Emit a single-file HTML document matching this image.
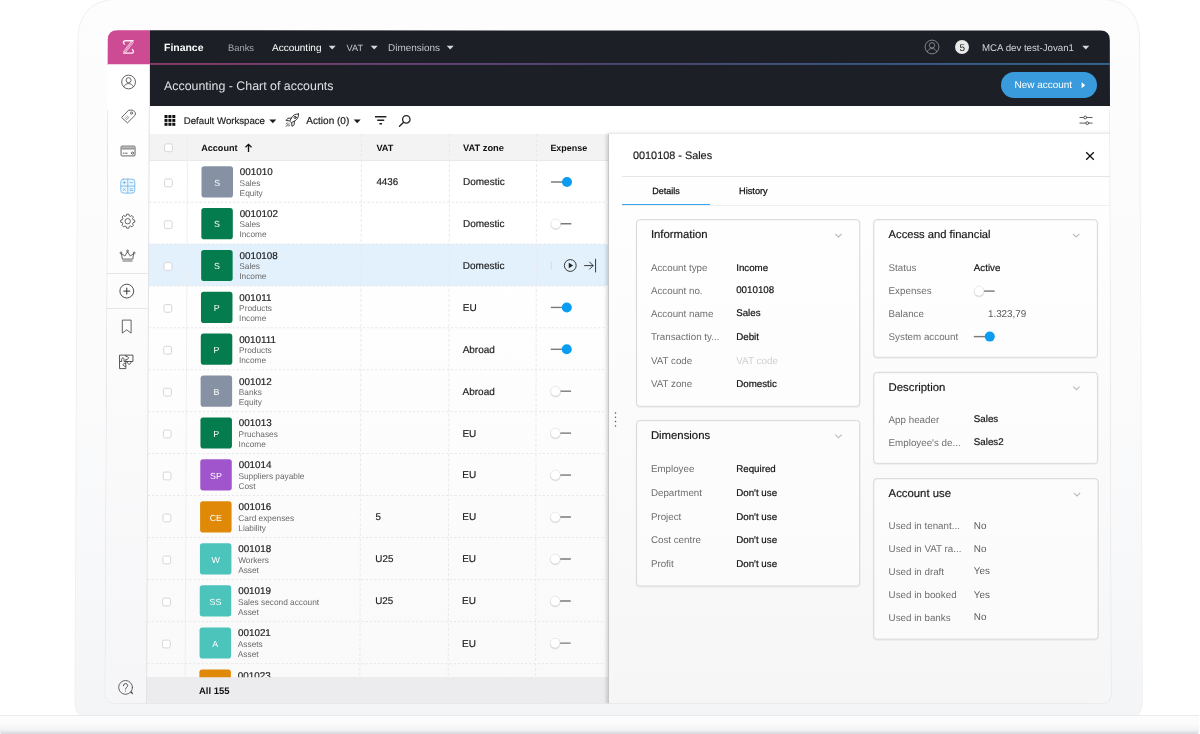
<!DOCTYPE html>
<html lang="en">
<head>
<meta charset="utf-8">
<title>Accounting - Chart of accounts</title>
<style>
*{box-sizing:border-box;margin:0;padding:0}
html,body{width:1200px;height:734px;overflow:hidden;background:#fff}
body{position:relative;font-family:"Liberation Sans",Arial,sans-serif;color:#1b1b1b;text-rendering:geometricPrecision}
#bezel{position:absolute;left:0;top:0}
#base{position:absolute;left:0;top:714.5px;width:1199px;height:19.5px;border-top:1px solid #e9eaee;border-radius:0 0 2px 2px;
 background:linear-gradient(to bottom,#fdfdfe 0%,#fbfbfc 45%,#f2f2f5 78%,#d6d7de 100%)}
#screen{position:absolute;left:0;top:0;width:1200px;height:734px;background:#fff;
 clip-path:path("M107.75 39.80Q107.80 30.30 117.30 30.30L1100.30 30.50Q1109.80 30.50 1109.82 40.00L1111.48 694.10Q1111.50 703.60 1102.00 703.60L114.10 703.50Q104.60 703.50 104.65 694.00Z")}
#screen div,#screen span,#screen svg{position:absolute}
#txt{will-change:transform}
#txt text{font-family:"Liberation Sans",Arial,sans-serif;white-space:pre}
</style>
</head>
<body>
<svg id="bezel" width="1200" height="734" viewBox="0 0 1200 734">
 <defs><linearGradient id="bz" x1="0" y1="0" x2="0" y2="1"><stop offset="0" stop-color="#fdfdfd"/><stop offset=".5" stop-color="#fbfbfc"/><stop offset=".8" stop-color="#f7f8f9"/><stop offset="1" stop-color="#f4f5f7"/></linearGradient></defs>
 <path d="M78 40C78 14 92 -0.5 116 -0.5H1102C1126 -0.500 1139.600 14 1139.600 40L1142.300 700C1142.300 709 1140 713 1136 716H81C77 713 75 709 75 700Z" fill="url(#bz)" stroke="#eff0f2" stroke-width="1"/>
</svg>
<div id="screen">
<div style="left:149.5px;top:30px;width:961.500px;height:75.600px;background:#1c1f26"></div>
<div style="left:107px;top:30px;width:42.700px;height:34.500px;background:#cd4b93"></div>
<div style="left:955.3px;top:40px;width:14px;height:14px;border-radius:50%;background:#e9e9ea"></div>
<div style="left:1000.8px;top:72.3px;width:95.800px;height:25.800px;border-radius:13px;background:#3a9bdc"></div>
<div style="left:150px;top:105.500px;width:961px;height:28.500px;background:#fff"></div>
<div style="left:140px;top:134px;width:471px;height:572px;background:linear-gradient(to bottom,#fff 0%,#fff 20%,#f9f9fa 100%)"></div>
<div style="left:140px;top:134px;width:471px;height:26.6px;background:#f3f3f4;border-bottom:1px solid #e9e9ea"></div>
<div style="left:140px;top:244.1px;width:471px;height:41.84px;background:#e2f1fc"></div>
<div style="left:187.4px;top:134px;width:0;height:572px;border-left:1px solid #efeff0;transform-origin:0 0;transform:skewX(-0.2462deg)"></div>
<div style="left:361.2px;top:134px;width:0;height:572px;border-left:1px dashed #e9e9eb;transform-origin:0 0;transform:skewX(-0.1710deg)"></div>
<div style="left:448.5px;top:134px;width:0;height:572px;border-left:1px dashed #e9e9eb;transform-origin:0 0;transform:skewX(-0.1332deg)"></div>
<div style="left:536px;top:134px;width:0;height:572px;border-left:1px dashed #e9e9eb;transform-origin:0 0;transform:skewX(-0.0953deg)"></div>
<div style="left:140px;top:677.2px;width:471px;height:30px;background:#ececee"></div>
<div style="left:608px;top:134px;width:504px;height:573px;background:linear-gradient(to bottom,#fff 0%,#fefefe 15%,#f6f6f7 100%);box-shadow:-1px 0 4px rgba(0,0,0,.2);border-left:1px solid #c6c6c9"></div>
<div style="left:622px;top:176px;width:489px;height:1px;background:#e6e6e8"></div>
<div style="left:622px;top:204.600px;width:489px;height:1px;background:#f0f0f2"></div>
<div style="left:622px;top:203.800px;width:87.500px;height:1.400px;background:#3aa5ef"></div>
<div style="left:100px;top:64.3px;width:50px;height:640px;background:linear-gradient(to bottom,#fff 0%,#fdfdfd 30%,#fafafb 55%,#f6f6f8 100%);clip-path:polygon(0 0,49.5px 0,46.56px 100%,0 100%)"></div>
<div style="left:149px;top:64.3px;width:0;height:641.7px;border-left:1px solid #e2e2e5;transform-origin:0 0;transform:skewX(-0.2629deg)"></div>
<div style="left:100px;top:273px;width:49px;height:1px;background:#e6e6e8"></div>
<div style="left:100px;top:308.4px;width:49px;height:1px;background:#e6e6e8"></div>
<svg id="ico" style="left:0;top:0" width="1200" height="734">
<defs><linearGradient id="hl" x1="0" y1="0" x2="1" y2="0"><stop offset="0" stop-color="#cd4b93"/><stop offset=".25" stop-color="#9b5aa6"/><stop offset=".5" stop-color="#6c60a8"/><stop offset=".75" stop-color="#4c7cc0"/><stop offset="1" stop-color="#3f93d6"/></linearGradient></defs><rect x="149.5" y="63.400" width="961.500" height="1.150" fill="url(#hl)"/>
<g transform="translate(122.4 39.5)" fill="none" stroke="#fff0f8" stroke-linejoin="round" stroke-linecap="round"><path d="M2.100 4.700C.300 3.400.700 1.200 3 1.200h7.600M9.900 10C11.700 11.300 11.300 13.600 9 13.600H1.400" stroke-width="1.350"/><path d="M10.600 1.200 1.400 13.600M8.900 1.700 1.100 12M10.900 2.900 3.100 13.200" stroke-width=".8" opacity=".9"/></g>
<path d="M328.7 45.8h7l-3.500 3.700z" fill="#d5d7db"/>
<path d="M370.7 45.8h7l-3.500 3.700z" fill="#d5d7db"/>
<path d="M446.7 45.8h7l-3.500 3.700z" fill="#d5d7db"/>
<g transform="translate(924.5 39.5)" fill="none" stroke="#8b8f98" stroke-width="0.9"><circle cx="7.5" cy="7.5" r="6.900"/><circle cx="7.5" cy="5.800" r="2.700"/><path d="M2.800 12.500c.700-2.400 2.500-3.500 4.700-3.500s4 1.100 4.700 3.500"/></g>
<path d="M1082.3 45.8h7l-3.500 3.700z" fill="#d5d7db"/>
<path d="M1081.600 82.200v6l3.600-3z" fill="#fff"/>
<g transform="translate(164.5 115)" fill="#111"><rect x="0.0" y="0.0" width="3" height="3"/><rect x="3.9" y="0.0" width="3" height="3"/><rect x="7.8" y="0.0" width="3" height="3"/><rect x="0.0" y="3.9" width="3" height="3"/><rect x="3.9" y="3.9" width="3" height="3"/><rect x="7.8" y="3.9" width="3" height="3"/><rect x="0.0" y="7.8" width="3" height="3"/><rect x="3.9" y="7.8" width="3" height="3"/><rect x="7.8" y="7.8" width="3" height="3"/></g>
<path d="M269.3 119.5h7l-3.500 3.700z" fill="#1b1b1b"/>
<g transform="translate(284.5 113)" fill="none" stroke="#222" stroke-width="0.9" stroke-linejoin="round" stroke-linecap="round"><path d="M14 1c-3.200-.200-5.600 1.200-7.200 4.100L5.300 8.200l1.500 1.500 3.100-1.500C12.800 6.600 14.200 4.200 14 1z"/><path d="M6.800 5.100 3.300 5.300 1.600 7.500l3.100.300M9.900 8.200l-.200 3.500-2.200 1.700-.300-3.100"/><circle cx="10.600" cy="4.400" r="1.100"/><path d="M4.300 10.700 1.700 13.300M3 9.800 1.900 10.900M5.200 12 4.100 13.100"/></g>
<path d="M353.7 119.5h7l-3.500 3.700z" fill="#1b1b1b"/>
<g transform="translate(375 116)" fill="none" stroke="#222" stroke-width="1.450"><path d="M0 .800h11.400M2.200 4.300h7M4.400 7.800h2.600"/></g>
<g transform="translate(398.5 114.5)" fill="none" stroke="#222" stroke-width="1.300" stroke-linecap="round"><circle cx="7.800" cy="4.900" r="3.700"/><path d="M5.100 7.700 1 11.800"/></g>
<g transform="translate(1079.5 114.5)" fill="none" stroke="#333" stroke-width="0.8"><path d="M0 3h4.300M7.100 3H13M0 8.600h6.300M9.100 8.600H13"/><circle cx="5.700" cy="3" r="1.400"/><circle cx="7.700" cy="8.600" r="1.400"/></g>
<g transform="translate(121.09 74.5)" fill="none" stroke="#4a4a4a" stroke-width="0.85" stroke-linejoin="round"><circle cx="7.5" cy="7.5" r="6.900"/><circle cx="7.5" cy="5.700" r="2.500"/><path d="M2.700 12.300c.900-2.100 2.600-3.200 4.800-3.200s3.900 1.100 4.800 3.200"/></g>
<g transform="translate(120.92 109)" fill="none" stroke="#4a4a4a" stroke-width="0.85" stroke-linejoin="round"><path d="M.700 8.400 7.800 1.200H12l2.400 2.400V6L6.500 13.900z"/><circle cx="10.700" cy="4.100" r="1.100"/><path d="M3.900 8.600l2.400 2.400M4.900 7.600l2.400 2.400M5.900 6.600l2.400 2.400" stroke-width="0.55"/></g>
<g transform="translate(120.56 145.6)" fill="none" stroke="#4a4a4a" stroke-width="0.85" stroke-linejoin="round"><rect x=".5" y=".5" width="14" height="9.800" rx="1"/><rect x=".9" y="1.700" width="13.200" height="2.300" fill="#9a9a9a" stroke="none"/><path d="M2.300 7.600h1.700M4.700 7.600h2.200" stroke-width="0.9"/><circle cx="12" cy="7.500" r="1.100"/></g>
<g transform="translate(120.29 178.6)" fill="#eef7fe" stroke="#63b2ec" stroke-width="0.8" stroke-linecap="round"><rect x=".5" y=".5" width="14" height="14" rx="2.800"/><path d="M7.500 .5v14M.5 7.500h14" fill="none"/><path d="M2.700 4h2.600M4 2.700v2.600M9.700 4h2.600M3.100 10.100l1.800 1.800M4.900 10.100l-1.800 1.800M9.700 10.300h2.600M9.700 11.900h2.600" stroke-width="0.8"/></g>
<g transform="translate(119.72 213.2)" fill="none" stroke="#4a4a4a" stroke-width="0.85" stroke-linejoin="round"><circle cx="8" cy="8" r="2.700"/><path d="M6.900 1h2.200l.400 1.700 1.200.500 1.500-.900 1.500 1.500-.900 1.500.500 1.200 1.700.400v2.200l-1.700.400-.500 1.200.900 1.500-1.500 1.500-1.500-.900-1.200.500-.400 1.700H6.900l-.400-1.700-1.200-.500-1.500.900-1.500-1.500.900-1.500-.500-1.200L1 9.100V6.900l1.700-.400.500-1.200-.900-1.500 1.500-1.500 1.500.900 1.200-.500z"/></g>
<g transform="translate(119.55 249.5)" fill="none" stroke="#4a4a4a" stroke-width="0.85" stroke-linejoin="round"><path d="M2.800 9.600 1.900 4.200l3.400 2.300L8 2.200l2.700 4.300 3.400-2.300-.900 5.400z"/><circle cx="8" cy="1.400" r=".9"/><circle cx="1.400" cy="3.400" r=".9"/><circle cx="14.600" cy="3.400" r=".9"/><path d="M3 11.400h10" stroke="#9a9a9a" stroke-width="1.5"/></g>
<g transform="translate(119.28 283.6)" fill="none" stroke="#333" stroke-width="0.85"><circle cx="7.5" cy="7.5" r="6.900"/><path d="M7.500 4.100v6.800M4.100 7.500h6.800" stroke-width="1"/></g>
<g transform="translate(121.72 319.5)" fill="none" stroke="#4a4a4a" stroke-width="0.85" stroke-linejoin="round"><path d="M.600.600h8.800v13L5 10.300.600 13.600z"/></g>
<g transform="translate(119.24 354.8)" fill="none" stroke="#2e2e2e" stroke-width="0.8" stroke-linejoin="round"><path d="M.300.300H13.700V6.700H6.600V13.800H.300z"/><path d="M6.600.300V1.700c3.500-.300 3.500 3.200 0 2.900V6.700M.300 6.700H2.400V4.600c0-2 2.400-2 2.400 0V6.700H6.600M6.600 8.400c-3.600-.300-3.600 3.400 0 3.100M8.200 6.700c-.300 3.600 3.900 3.600 3.600 0"/></g>
<g transform="translate(117.58 679.4)" fill="none" stroke="#4a4a4a" stroke-width="0.85" stroke-linecap="round"><circle cx="8" cy="8" r="6.900"/><path d="M12.900 13.200l2.300 1.500-1-2.600" fill="#4a4a4a" stroke-width=".5"/><path d="M5.900 6.300c0-1.300 1-2.100 2.100-2.100s2.100.800 2.100 2c0 1.600-2.100 1.700-2.100 3.400" stroke-width="1"/><circle cx="8" cy="11.700" r=".5" fill="#4a4a4a" stroke="none"/></g>
<path d="M149.19 202.29H608" stroke="#e7e7ea" stroke-width="1" stroke-dasharray="2.2 2"/>
<rect x="164.5" y="179" width="7.8" height="7.8" rx="1.6" fill="#fff" stroke="#d6d6da" stroke-width="1"/>
<rect x="201.5" y="166.3" width="31.500" height="31.200" rx="2.800" fill="#8691a4"/>
<path d="M551 182h13" stroke="#7a7a7a" stroke-width="1.4"/><circle cx="567" cy="182" r="5" fill="#0a9cf1"/>
<path d="M149 244.1H608" stroke="#e7e7ea" stroke-width="1" stroke-dasharray="2.2 2"/>
<rect x="164.31" y="220.79" width="7.8" height="7.8" rx="1.6" fill="#fff" stroke="#d6d6da" stroke-width="1"/>
<rect x="201.32" y="208.09" width="31.500" height="31.200" rx="2.800" fill="#047c4d"/>
<path d="M558.93 223.79h12.400" stroke="#7a7a7a" stroke-width="1.4"/><circle cx="555.73" cy="224.69" r="5.500" fill="#000" opacity=".06"/><circle cx="555.73" cy="224.39" r="5.100" fill="#000" opacity=".09"/><circle cx="555.73" cy="223.79" r="4.900" fill="#fff" stroke="#d9d9dc" stroke-width=".5"/>
<path d="M148.8 285.94H608" stroke="#e7e7ea" stroke-width="1" stroke-dasharray="2.2 2"/>
<rect x="164.12" y="262.6" width="7.8" height="7.8" rx="1.6" fill="#fff" stroke="#d6d6da" stroke-width="1"/>
<rect x="201.15" y="249.9" width="31.500" height="31.200" rx="2.800" fill="#047c4d"/>
<path d="M551.37 261.6v8" stroke="#cfdde8" stroke-width="1"/>
<g transform="translate(563.37 259.2)" fill="none" stroke="#222" stroke-width="0.9"><circle cx="6.900" cy="6.300" r="5.900"/><path d="M5.400 3.500 9.700 6.300 5.400 9.100z" fill="#222" stroke="none"/></g>
<g transform="translate(583.37 259.6)" fill="none" stroke="#222" stroke-width="0.9"><path d="M.800 6h9M6 2.200 9.800 6 6 9.800M12.200 -.800v13.600"/></g>
<path d="M148.61 327.81H608" stroke="#e7e7ea" stroke-width="1" stroke-dasharray="2.2 2"/>
<rect x="163.94" y="304.44" width="7.8" height="7.8" rx="1.6" fill="#fff" stroke="#d6d6da" stroke-width="1"/>
<rect x="200.97" y="291.74" width="31.500" height="31.200" rx="2.800" fill="#047c4d"/>
<path d="M550.8 307.44h13" stroke="#7a7a7a" stroke-width="1.4"/><circle cx="566.8" cy="307.44" r="5" fill="#0a9cf1"/>
<path d="M148.42 369.7H608" stroke="#e7e7ea" stroke-width="1" stroke-dasharray="2.2 2"/>
<rect x="163.75" y="346.31" width="7.8" height="7.8" rx="1.6" fill="#fff" stroke="#d6d6da" stroke-width="1"/>
<rect x="200.8" y="333.61" width="31.500" height="31.200" rx="2.800" fill="#047c4d"/>
<path d="M550.74 349.31h13" stroke="#7a7a7a" stroke-width="1.4"/><circle cx="566.74" cy="349.31" r="5" fill="#0a9cf1"/>
<path d="M148.23 411.62H608" stroke="#e7e7ea" stroke-width="1" stroke-dasharray="2.2 2"/>
<rect x="163.56" y="388.2" width="7.8" height="7.8" rx="1.6" fill="#fff" stroke="#d6d6da" stroke-width="1"/>
<rect x="200.62" y="375.5" width="31.500" height="31.200" rx="2.800" fill="#8691a4"/>
<path d="M558.68 391.2h12.400" stroke="#7a7a7a" stroke-width="1.4"/><circle cx="555.48" cy="392.1" r="5.500" fill="#000" opacity=".06"/><circle cx="555.48" cy="391.8" r="5.100" fill="#000" opacity=".09"/><circle cx="555.48" cy="391.2" r="4.900" fill="#fff" stroke="#d9d9dc" stroke-width=".5"/>
<path d="M148.04 453.57H608" stroke="#e7e7ea" stroke-width="1" stroke-dasharray="2.2 2"/>
<rect x="163.37" y="430.12" width="7.8" height="7.8" rx="1.6" fill="#fff" stroke="#d6d6da" stroke-width="1"/>
<rect x="200.45" y="417.42" width="31.500" height="31.200" rx="2.800" fill="#047c4d"/>
<path d="M558.61 433.12h12.400" stroke="#7a7a7a" stroke-width="1.4"/><circle cx="555.41" cy="434.02" r="5.500" fill="#000" opacity=".06"/><circle cx="555.41" cy="433.72" r="5.100" fill="#000" opacity=".09"/><circle cx="555.41" cy="433.12" r="4.900" fill="#fff" stroke="#d9d9dc" stroke-width=".5"/>
<path d="M147.84 495.54H608" stroke="#e7e7ea" stroke-width="1" stroke-dasharray="2.2 2"/>
<rect x="163.19" y="472.07" width="7.8" height="7.8" rx="1.6" fill="#fff" stroke="#d6d6da" stroke-width="1"/>
<rect x="200.27" y="459.37" width="31.500" height="31.200" rx="2.800" fill="#a055cc"/>
<path d="M558.55 475.07h12.400" stroke="#7a7a7a" stroke-width="1.4"/><circle cx="555.35" cy="475.97" r="5.500" fill="#000" opacity=".06"/><circle cx="555.35" cy="475.67" r="5.100" fill="#000" opacity=".09"/><circle cx="555.35" cy="475.07" r="4.900" fill="#fff" stroke="#d9d9dc" stroke-width=".5"/>
<path d="M147.65 537.54H608" stroke="#e7e7ea" stroke-width="1" stroke-dasharray="2.2 2"/>
<rect x="163" y="514.04" width="7.8" height="7.8" rx="1.6" fill="#fff" stroke="#d6d6da" stroke-width="1"/>
<rect x="200.09" y="501.34" width="31.500" height="31.200" rx="2.800" fill="#e08909"/>
<path d="M558.48 517.04h12.400" stroke="#7a7a7a" stroke-width="1.4"/><circle cx="555.28" cy="517.94" r="5.500" fill="#000" opacity=".06"/><circle cx="555.28" cy="517.64" r="5.100" fill="#000" opacity=".09"/><circle cx="555.28" cy="517.04" r="4.900" fill="#fff" stroke="#d9d9dc" stroke-width=".5"/>
<path d="M147.46 579.57H608" stroke="#e7e7ea" stroke-width="1" stroke-dasharray="2.2 2"/>
<rect x="162.81" y="556.04" width="7.8" height="7.8" rx="1.6" fill="#fff" stroke="#d6d6da" stroke-width="1"/>
<rect x="199.92" y="543.34" width="31.500" height="31.200" rx="2.800" fill="#4cc3bb"/>
<path d="M558.42 559.04h12.400" stroke="#7a7a7a" stroke-width="1.4"/><circle cx="555.22" cy="559.94" r="5.500" fill="#000" opacity=".06"/><circle cx="555.22" cy="559.64" r="5.100" fill="#000" opacity=".09"/><circle cx="555.22" cy="559.04" r="4.900" fill="#fff" stroke="#d9d9dc" stroke-width=".5"/>
<path d="M147.27 621.62H608" stroke="#e7e7ea" stroke-width="1" stroke-dasharray="2.2 2"/>
<rect x="162.62" y="598.07" width="7.8" height="7.8" rx="1.6" fill="#fff" stroke="#d6d6da" stroke-width="1"/>
<rect x="199.74" y="585.37" width="31.500" height="31.200" rx="2.800" fill="#4cc3bb"/>
<path d="M558.35 601.07h12.400" stroke="#7a7a7a" stroke-width="1.4"/><circle cx="555.15" cy="601.97" r="5.500" fill="#000" opacity=".06"/><circle cx="555.15" cy="601.67" r="5.100" fill="#000" opacity=".09"/><circle cx="555.15" cy="601.07" r="4.900" fill="#fff" stroke="#d9d9dc" stroke-width=".5"/>
<path d="M147.07 663.7H608" stroke="#e7e7ea" stroke-width="1" stroke-dasharray="2.2 2"/>
<rect x="162.44" y="640.12" width="7.8" height="7.8" rx="1.6" fill="#fff" stroke="#d6d6da" stroke-width="1"/>
<rect x="199.57" y="627.42" width="31.500" height="31.200" rx="2.800" fill="#4cc3bb"/>
<path d="M558.28 643.12h12.400" stroke="#7a7a7a" stroke-width="1.4"/><circle cx="555.08" cy="644.02" r="5.500" fill="#000" opacity=".06"/><circle cx="555.08" cy="643.72" r="5.100" fill="#000" opacity=".09"/><circle cx="555.08" cy="643.12" r="4.900" fill="#fff" stroke="#d9d9dc" stroke-width=".5"/>
<path d="M146.88 705.81H608" stroke="#e7e7ea" stroke-width="1" stroke-dasharray="2.2 2"/>
<path d="M199.39 677.2V672.3Q199.39 669.5 202.19 669.5H228.09Q230.89 669.5 230.89 672.3V677.2z" fill="#e08909"/>
<rect x="164.5" y="143.9" width="7.8" height="7.8" rx="1.6" fill="#fff" stroke="#d6d6da" stroke-width="1"/>
<g transform="translate(244.5 143.4)" fill="none" stroke="#111" stroke-width="1.3"><path d="M4 8.500V1.200M1 3.900 4 .900 7 3.900"/></g>
<g transform="translate(1085.5 151.5)" fill="none" stroke="#111" stroke-width="1.3"><path d="M.700.700l7.600 7.600M8.300.700.700 8.300"/></g>
<circle cx="615.500" cy="413" r=".75" fill="#555"/>
<circle cx="615.500" cy="417.3" r=".75" fill="#555"/>
<circle cx="615.500" cy="421.6" r=".75" fill="#555"/>
<circle cx="615.500" cy="425.9" r=".75" fill="#555"/>
<rect x="636.5" y="220.5" width="223.2" height="186.7" rx="3.200" fill="none" stroke="#000" stroke-opacity=".045" stroke-width="1.600"/><rect x="636.5" y="219.6" width="223.2" height="186.7" rx="3.200" fill="#fff" fill-opacity=".45" stroke="#d9d9dc" stroke-width="1"/>
<g transform="translate(834.5 233.1)" fill="none" stroke="#b8b8bb" stroke-width="1.050"><path d="M.800.800 4 3.900 7.200.800"/></g>
<rect x="636.5" y="421.3" width="223.2" height="165.6" rx="3.200" fill="none" stroke="#000" stroke-opacity=".045" stroke-width="1.600"/><rect x="636.5" y="420.4" width="223.2" height="165.6" rx="3.200" fill="#fff" fill-opacity=".45" stroke="#d9d9dc" stroke-width="1"/>
<g transform="translate(834.5 433.9)" fill="none" stroke="#b8b8bb" stroke-width="1.050"><path d="M.800.800 4 3.900 7.200.800"/></g>
<rect x="873.7" y="220.5" width="223.7" height="137.7" rx="3.200" fill="none" stroke="#000" stroke-opacity=".045" stroke-width="1.600"/><rect x="873.7" y="219.6" width="223.7" height="137.7" rx="3.200" fill="#fff" fill-opacity=".45" stroke="#d9d9dc" stroke-width="1"/>
<g transform="translate(1072.2 233.1)" fill="none" stroke="#b8b8bb" stroke-width="1.050"><path d="M.800.800 4 3.900 7.200.800"/></g>
<path d="M982.3 291.1h12.400" stroke="#7a7a7a" stroke-width="1.4"/><circle cx="979.1" cy="292" r="5.500" fill="#000" opacity=".06"/><circle cx="979.1" cy="291.7" r="5.100" fill="#000" opacity=".09"/><circle cx="979.1" cy="291.1" r="4.900" fill="#fff" stroke="#d9d9dc" stroke-width=".5"/>
<path d="M973.8 336.6h13" stroke="#7a7a7a" stroke-width="1.4"/><circle cx="989.8" cy="336.6" r="5" fill="#0a9cf1"/>
<rect x="873.7" y="373.2" width="223.9" height="91.1" rx="3.200" fill="none" stroke="#000" stroke-opacity=".045" stroke-width="1.600"/><rect x="873.7" y="372.3" width="223.9" height="91.1" rx="3.200" fill="#fff" fill-opacity=".45" stroke="#d9d9dc" stroke-width="1"/>
<g transform="translate(1072.4 385.8)" fill="none" stroke="#b8b8bb" stroke-width="1.050"><path d="M.800.800 4 3.900 7.200.800"/></g>
<rect x="873.7" y="479.5" width="224.5" height="160.5" rx="3.200" fill="none" stroke="#000" stroke-opacity=".045" stroke-width="1.600"/><rect x="873.7" y="478.6" width="224.5" height="160.5" rx="3.200" fill="#fff" fill-opacity=".45" stroke="#d9d9dc" stroke-width="1"/>
<g transform="translate(1073 492.1)" fill="none" stroke="#b8b8bb" stroke-width="1.050"><path d="M.800.800 4 3.900 7.200.800"/></g>
<path d="M107.600 110 104.600 694.500Q104.600 703.500 114 703.500L1102 703.600Q1111.500 703.600 1111.500 694L1110 110" fill="none" stroke="#dcdde2" stroke-width="1"/>
</svg>
<svg id="txt" style="left:0;top:0" width="1200" height="734">
<text x="164" y="51" font-size="10.45" fill="#fff" font-weight="700">Finance</text>
<text x="228" y="51" font-size="9.4" fill="#a4a8b0">Banks</text>
<text x="272" y="51" font-size="10" fill="#fff">Accounting</text>
<text x="346.5" y="51" font-size="9.2" fill="#c3c6cc">VAT</text>
<text x="388" y="51" font-size="9.95" fill="#c3c6cc">Dimensions</text>
<text x="962.3" y="50.6" font-size="10" fill="#222" text-anchor="middle">5</text>
<text x="982" y="51" font-size="9.68" fill="#d0d2d7">MCA dev test-Jovan1</text>
<text x="164" y="89.5" font-size="12.4" fill="#dfe0e3">Accounting - Chart of accounts</text>
<text x="1014.6" y="88" font-size="9.93" fill="#fff">New account</text>
<text x="183.8" y="123.8" font-size="9.64" fill="#1b1b1b" stroke="#1b1b1b" stroke-width="0.18">Default Workspace</text>
<text x="306.3" y="123.8" font-size="10.05" fill="#1b1b1b" stroke="#1b1b1b" stroke-width="0.18">Action (0)</text>
<text x="217.2" y="185.7" font-size="8.9" fill="#fff" text-anchor="middle">S</text>
<text x="239.8" y="175.3" font-size="9.86" fill="#1d1d1d" stroke="#1d1d1d" stroke-width="0.18">001010</text>
<text x="239.6" y="185.7" font-size="8.3" fill="#6a6a6a">Sales</text>
<text x="239.6" y="195.7" font-size="8.3" fill="#6a6a6a">Equity</text>
<text x="376.4" y="185.4" font-size="9.84" fill="#1d1d1d" stroke="#1d1d1d" stroke-width="0.18">4436</text>
<text x="463" y="185.4" font-size="10" fill="#1d1d1d" stroke="#1d1d1d" stroke-width="0.18">Domestic</text>
<text x="217.03" y="227.49" font-size="8.9" fill="#fff" text-anchor="middle">S</text>
<text x="239.64" y="217.09" font-size="9.86" fill="#1d1d1d" stroke="#1d1d1d" stroke-width="0.18">0010102</text>
<text x="239.44" y="227.49" font-size="8.3" fill="#6a6a6a">Sales</text>
<text x="239.44" y="237.49" font-size="8.3" fill="#6a6a6a">Income</text>
<text x="462.91" y="227.19" font-size="10" fill="#1d1d1d" stroke="#1d1d1d" stroke-width="0.18">Domestic</text>
<text x="216.86" y="269.3" font-size="8.9" fill="#fff" text-anchor="middle">S</text>
<text x="239.47" y="258.9" font-size="9.86" fill="#1d1d1d" stroke="#1d1d1d" stroke-width="0.18">0010108</text>
<text x="239.27" y="269.3" font-size="8.3" fill="#6a6a6a">Sales</text>
<text x="239.27" y="279.3" font-size="8.3" fill="#6a6a6a">Income</text>
<text x="462.81" y="269" font-size="10" fill="#1d1d1d" stroke="#1d1d1d" stroke-width="0.18">Domestic</text>
<text x="216.69" y="311.14" font-size="8.9" fill="#fff" text-anchor="middle">P</text>
<text x="239.31" y="300.74" font-size="9.86" fill="#1d1d1d" stroke="#1d1d1d" stroke-width="0.18">001011</text>
<text x="239.11" y="311.14" font-size="8.3" fill="#6a6a6a">Products</text>
<text x="239.11" y="321.14" font-size="8.3" fill="#6a6a6a">Income</text>
<text x="462.72" y="310.84" font-size="10" fill="#1d1d1d" stroke="#1d1d1d" stroke-width="0.18">EU</text>
<text x="216.52" y="353.01" font-size="8.9" fill="#fff" text-anchor="middle">P</text>
<text x="239.15" y="342.61" font-size="9.86" fill="#1d1d1d" stroke="#1d1d1d" stroke-width="0.18">0010111</text>
<text x="238.95" y="353.01" font-size="8.3" fill="#6a6a6a">Products</text>
<text x="238.95" y="363.01" font-size="8.3" fill="#6a6a6a">Income</text>
<text x="462.63" y="352.71" font-size="10" fill="#1d1d1d" stroke="#1d1d1d" stroke-width="0.18">Abroad</text>
<text x="216.35" y="394.9" font-size="8.9" fill="#fff" text-anchor="middle">B</text>
<text x="238.98" y="384.5" font-size="9.86" fill="#1d1d1d" stroke="#1d1d1d" stroke-width="0.18">001012</text>
<text x="238.78" y="394.9" font-size="8.3" fill="#6a6a6a">Banks</text>
<text x="238.78" y="404.9" font-size="8.3" fill="#6a6a6a">Equity</text>
<text x="462.54" y="394.6" font-size="10" fill="#1d1d1d" stroke="#1d1d1d" stroke-width="0.18">Abroad</text>
<text x="216.18" y="436.82" font-size="8.9" fill="#fff" text-anchor="middle">P</text>
<text x="238.82" y="426.42" font-size="9.86" fill="#1d1d1d" stroke="#1d1d1d" stroke-width="0.18">001013</text>
<text x="238.62" y="436.82" font-size="8.3" fill="#6a6a6a">Pruchases</text>
<text x="238.62" y="446.82" font-size="8.3" fill="#6a6a6a">Income</text>
<text x="462.44" y="436.52" font-size="10" fill="#1d1d1d" stroke="#1d1d1d" stroke-width="0.18">EU</text>
<text x="216.01" y="478.77" font-size="8.9" fill="#fff" text-anchor="middle">SP</text>
<text x="238.66" y="468.37" font-size="9.86" fill="#1d1d1d" stroke="#1d1d1d" stroke-width="0.18">001014</text>
<text x="238.45" y="478.77" font-size="8.3" fill="#6a6a6a">Suppliers payable</text>
<text x="238.45" y="488.77" font-size="8.3" fill="#6a6a6a">Cost</text>
<text x="462.35" y="478.47" font-size="10" fill="#1d1d1d" stroke="#1d1d1d" stroke-width="0.18">EU</text>
<text x="215.83" y="520.74" font-size="8.9" fill="#fff" text-anchor="middle">CE</text>
<text x="238.49" y="510.34" font-size="9.86" fill="#1d1d1d" stroke="#1d1d1d" stroke-width="0.18">001016</text>
<text x="238.29" y="520.74" font-size="8.3" fill="#6a6a6a">Card expenses</text>
<text x="238.29" y="530.74" font-size="8.3" fill="#6a6a6a">Liability</text>
<text x="375.44" y="520.44" font-size="9.84" fill="#1d1d1d" stroke="#1d1d1d" stroke-width="0.18">5</text>
<text x="462.26" y="520.44" font-size="10" fill="#1d1d1d" stroke="#1d1d1d" stroke-width="0.18">EU</text>
<text x="215.66" y="562.74" font-size="8.9" fill="#fff" text-anchor="middle">W</text>
<text x="238.33" y="552.34" font-size="9.86" fill="#1d1d1d" stroke="#1d1d1d" stroke-width="0.18">001018</text>
<text x="238.13" y="562.74" font-size="8.3" fill="#6a6a6a">Workers</text>
<text x="238.13" y="572.74" font-size="8.3" fill="#6a6a6a">Asset</text>
<text x="375.32" y="562.44" font-size="9.84" fill="#1d1d1d" stroke="#1d1d1d" stroke-width="0.18">U25</text>
<text x="462.16" y="562.44" font-size="10" fill="#1d1d1d" stroke="#1d1d1d" stroke-width="0.18">EU</text>
<text x="215.49" y="604.77" font-size="8.9" fill="#fff" text-anchor="middle">SS</text>
<text x="238.16" y="594.37" font-size="9.86" fill="#1d1d1d" stroke="#1d1d1d" stroke-width="0.18">001019</text>
<text x="237.96" y="604.77" font-size="8.3" fill="#6a6a6a">Sales second account</text>
<text x="237.96" y="614.77" font-size="8.3" fill="#6a6a6a">Asset</text>
<text x="375.2" y="604.47" font-size="9.84" fill="#1d1d1d" stroke="#1d1d1d" stroke-width="0.18">U25</text>
<text x="462.07" y="604.47" font-size="10" fill="#1d1d1d" stroke="#1d1d1d" stroke-width="0.18">EU</text>
<text x="215.32" y="646.82" font-size="8.9" fill="#fff" text-anchor="middle">A</text>
<text x="238" y="636.42" font-size="9.86" fill="#1d1d1d" stroke="#1d1d1d" stroke-width="0.18">001021</text>
<text x="237.8" y="646.82" font-size="8.3" fill="#6a6a6a">Assets</text>
<text x="237.8" y="656.82" font-size="8.3" fill="#6a6a6a">Asset</text>
<text x="461.98" y="646.52" font-size="10" fill="#1d1d1d" stroke="#1d1d1d" stroke-width="0.18">EU</text>
<text x="237.84" y="678.5" font-size="9.86" fill="#1d1d1d" stroke="#1d1d1d" stroke-width="0.18">001023</text>
<text x="201.2" y="151" font-size="9.1" fill="#111" font-weight="700">Account</text>
<text x="376.4" y="151" font-size="9.2" fill="#111" font-weight="700">VAT</text>
<text x="463" y="151" font-size="9.3" fill="#111" font-weight="700">VAT zone</text>
<text x="550.4" y="151" font-size="8.95" fill="#111" font-weight="700">Expense</text>
<rect x="236" y="677.2" width="50" height="12" fill="#ececee"/>
<text x="199" y="694" font-size="9.46" fill="#111" font-weight="700">All 155</text>
<text x="633" y="159.3" font-size="10.86" fill="#1d1d1d" stroke="#1d1d1d" stroke-width="0.18">0010108 - Sales</text>
<text x="652.3" y="194" font-size="9" fill="#111" stroke="#111" stroke-width="0.25">Details</text>
<text x="739" y="194" font-size="9.22" fill="#111" stroke="#111" stroke-width="0.25">History</text>
<text x="650.9" y="238.2" font-size="11.35" fill="#161616" stroke="#161616" stroke-width="0.18">Information</text>
<text x="650.9" y="271.2" font-size="9.79" fill="#6f6f6f">Account type</text>
<text x="736.2" y="271.2" font-size="9.75" fill="#111" stroke="#111" stroke-width="0.18">Income</text>
<text x="650.9" y="294.4" font-size="9.79" fill="#6f6f6f">Account no.</text>
<text x="736.2" y="293.4" font-size="9.75" fill="#111" stroke="#111" stroke-width="0.18">0010108</text>
<text x="650.9" y="316.9" font-size="9.79" fill="#6f6f6f">Account name</text>
<text x="736.2" y="315.8" font-size="9.75" fill="#111" stroke="#111" stroke-width="0.18">Sales</text>
<text x="650.9" y="339.8" font-size="9.79" fill="#6f6f6f">Transaction ty...</text>
<text x="736.2" y="339.8" font-size="9.75" fill="#111" stroke="#111" stroke-width="0.18">Debit</text>
<text x="650.9" y="363.6" font-size="9.79" fill="#6f6f6f">VAT code</text>
<text x="736.2" y="363.6" font-size="9.9" fill="#cfcfd2">VAT code</text>
<text x="650.9" y="387.3" font-size="9.79" fill="#6f6f6f">VAT zone</text>
<text x="736.2" y="387.3" font-size="9.75" fill="#111" stroke="#111" stroke-width="0.18">Domestic</text>
<text x="650.9" y="439.4" font-size="11.35" fill="#161616" stroke="#161616" stroke-width="0.18">Dimensions</text>
<text x="650.9" y="472" font-size="9.79" fill="#6f6f6f">Employee</text>
<text x="736.2" y="472" font-size="9.75" fill="#111" stroke="#111" stroke-width="0.18">Required</text>
<text x="650.9" y="496" font-size="9.79" fill="#6f6f6f">Department</text>
<text x="736.2" y="496" font-size="9.75" fill="#111" stroke="#111" stroke-width="0.18">Don't use</text>
<text x="650.9" y="519.7" font-size="9.79" fill="#6f6f6f">Project</text>
<text x="736.2" y="519.7" font-size="9.75" fill="#111" stroke="#111" stroke-width="0.18">Don't use</text>
<text x="650.9" y="543.4" font-size="9.79" fill="#6f6f6f">Cost centre</text>
<text x="736.2" y="543.4" font-size="9.75" fill="#111" stroke="#111" stroke-width="0.18">Don't use</text>
<text x="650.9" y="567.1" font-size="9.79" fill="#6f6f6f">Profit</text>
<text x="736.2" y="567.1" font-size="9.75" fill="#111" stroke="#111" stroke-width="0.18">Don't use</text>
<text x="888.6" y="238.2" font-size="11.2" fill="#161616" stroke="#161616" stroke-width="0.18">Access and financial</text>
<text x="888.6" y="271.2" font-size="9.79" fill="#6f6f6f">Status</text>
<text x="973.8" y="271.2" font-size="9.75" fill="#111" stroke="#111" stroke-width="0.18">Active</text>
<text x="888.6" y="294.2" font-size="9.79" fill="#6f6f6f">Expenses</text>
<text x="888.6" y="316.7" font-size="9.79" fill="#6f6f6f">Balance</text>
<text x="987.9" y="316.7" font-size="9.9" fill="#5c5c5c">1.323,79</text>
<text x="888.6" y="340.1" font-size="9.79" fill="#6f6f6f">System account</text>
<text x="888.6" y="390.6" font-size="11.35" fill="#161616" stroke="#161616" stroke-width="0.18">Description</text>
<text x="888.6" y="423.1" font-size="9.79" fill="#6f6f6f">App header</text>
<text x="973.8" y="422.3" font-size="9.75" fill="#111" stroke="#111" stroke-width="0.18">Sales</text>
<text x="888.6" y="446" font-size="9.79" fill="#6f6f6f">Employee's de...</text>
<text x="973.8" y="445.2" font-size="9.75" fill="#111" stroke="#111" stroke-width="0.18">Sales2</text>
<text x="888.6" y="496.9" font-size="11.35" fill="#161616" stroke="#161616" stroke-width="0.18">Account use</text>
<text x="888.6" y="529.4" font-size="9.79" fill="#6f6f6f">Used in tenant...</text>
<text x="973.8" y="529" font-size="9.9" fill="#5c5c5c">No</text>
<text x="888.6" y="551.9" font-size="9.79" fill="#6f6f6f">Used in VAT ra...</text>
<text x="973.8" y="551.5" font-size="9.9" fill="#5c5c5c">No</text>
<text x="888.6" y="574.8" font-size="9.79" fill="#6f6f6f">Used in draft</text>
<text x="973.8" y="574.4" font-size="9.9" fill="#5c5c5c">Yes</text>
<text x="888.6" y="598.1" font-size="9.79" fill="#6f6f6f">Used in booked</text>
<text x="973.8" y="597.7" font-size="9.9" fill="#5c5c5c">Yes</text>
<text x="888.6" y="620.6" font-size="9.79" fill="#6f6f6f">Used in banks</text>
<text x="973.8" y="620.2" font-size="9.9" fill="#5c5c5c">No</text>
</svg>

</div>
<div id="base"></div>
</body>
</html>
